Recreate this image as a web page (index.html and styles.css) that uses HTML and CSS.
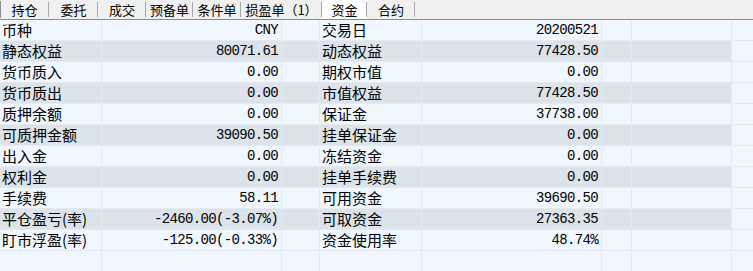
FILE: index.html
```html
<!DOCTYPE html>
<html lang="zh-CN">
<head>
<meta charset="utf-8">
<title>资金</title>
<link rel="stylesheet" href="styles.css">
</head>
<body>
<div class="panel">
  <div class="tabs">
    <div class="tab w49">持仓</div>
    <div class="tab w49">委托</div>
    <div class="tab w48">成交</div>
    <div class="tab w47">预备单</div>
    <div class="tab w48">条件单</div>
    <div class="tab w81">损盈单（1）</div>
    <div class="tab w45 active">资金</div>
    <div class="tab w48">合约</div>
  </div>
  <div class="grid">
    <div class="row"><div class="c lbl">币种</div><div class="c val">CNY</div><div class="c"></div><div class="c lbl">交易日</div><div class="c val">20200521</div><div class="c"></div><div class="c"></div><div class="c last"></div></div>
    <div class="row alt"><div class="c lbl">静态权益</div><div class="c val">80071.61</div><div class="c"></div><div class="c lbl">动态权益</div><div class="c val">77428.50</div><div class="c"></div><div class="c"></div><div class="c last"></div></div>
    <div class="row"><div class="c lbl">货币质入</div><div class="c val">0.00</div><div class="c"></div><div class="c lbl">期权市值</div><div class="c val">0.00</div><div class="c"></div><div class="c"></div><div class="c last"></div></div>
    <div class="row alt"><div class="c lbl">货币质出</div><div class="c val">0.00</div><div class="c"></div><div class="c lbl">市值权益</div><div class="c val">77428.50</div><div class="c"></div><div class="c"></div><div class="c last"></div></div>
    <div class="row"><div class="c lbl">质押余额</div><div class="c val">0.00</div><div class="c"></div><div class="c lbl">保证金</div><div class="c val">37738.00</div><div class="c"></div><div class="c"></div><div class="c last"></div></div>
    <div class="row alt"><div class="c lbl">可质押金额</div><div class="c val">39090.50</div><div class="c"></div><div class="c lbl">挂单保证金</div><div class="c val">0.00</div><div class="c"></div><div class="c"></div><div class="c last"></div></div>
    <div class="row"><div class="c lbl">出入金</div><div class="c val">0.00</div><div class="c"></div><div class="c lbl">冻结资金</div><div class="c val">0.00</div><div class="c"></div><div class="c"></div><div class="c last"></div></div>
    <div class="row alt"><div class="c lbl">权利金</div><div class="c val">0.00</div><div class="c"></div><div class="c lbl">挂单手续费</div><div class="c val">0.00</div><div class="c"></div><div class="c"></div><div class="c last"></div></div>
    <div class="row"><div class="c lbl">手续费</div><div class="c val">58.11</div><div class="c"></div><div class="c lbl">可用资金</div><div class="c val">39690.50</div><div class="c"></div><div class="c"></div><div class="c last"></div></div>
    <div class="row alt"><div class="c lbl">平仓盈亏(率)</div><div class="c val">-2460.00(-3.07%)</div><div class="c"></div><div class="c lbl">可取资金</div><div class="c val">27363.35</div><div class="c"></div><div class="c"></div><div class="c last"></div></div>
    <div class="row"><div class="c lbl">盯市浮盈(率)</div><div class="c val">-125.00(-0.33%)</div><div class="c"></div><div class="c lbl">资金使用率</div><div class="c val">48.74%</div><div class="c"></div><div class="c"></div><div class="c last"></div></div>
    <div class="row"><div class="c"></div><div class="c"></div><div class="c"></div><div class="c"></div><div class="c"></div><div class="c"></div><div class="c"></div><div class="c last"></div></div>
  </div>
</div>
</body>
</html>
```
FILE: styles.css
```css
html, body {
  margin: 0;
  padding: 0;
  background: #f0f7ff;
}
body {
  width: 753px;
  height: 271px;
  overflow: hidden;
  font-family: "Noto Sans CJK SC", sans-serif;
  color: #000;
}
.panel {
  display: flex;
  flex-direction: column;
}
.tabs {
  display: flex;
  height: 19px;
  background-color: #f0f0f0;
  border-bottom: 1px solid #8c8c8c;
  background-image: linear-gradient(#8c8c8c, #8c8c8c);
  background-repeat: no-repeat;
  background-size: 1px 17px;
  background-position: 0 1px;
}
.tab {
  box-sizing: border-box;
  height: 19px;
  display: flex;
  align-items: center;
  justify-content: center;
  font-size: 13px;
  line-height: 19px;
  padding-bottom: 1px;
  background-image: linear-gradient(#a8a8a8, #a8a8a8);
  background-repeat: no-repeat;
  background-size: 1px 15px;
  background-position: right 0 top 2px;
}
.tab.active {
  background-color: #ffffff;
}
.w49 { width: 49px; }
.w48 { width: 48px; }
.w47 { width: 47px; }
.w45 { width: 45px; }
.w81 { width: 81px; }
.grid {
  display: flex;
  flex-direction: column;
}
.row {
  display: grid;
  grid-template-columns: 102px 180px 38px 102px 180px 30px 100px 21px;
  height: 21px;
}
.c {
  box-sizing: border-box;
  height: 21px;
  border-right: 1px solid #e6eaee;
  border-bottom: 1px solid #e6eaee;
  background: #f0f7ff;
  white-space: nowrap;
  overflow: hidden;
  line-height: 20px;
}
.row.alt .c {
  background: #dce3ea;
}
.row.alt .c.last {
  background: #f0f7ff;
}
.c.last {
  border-right: none;
}
.lbl {
  font-size: 15px;
  padding-left: 2px;
}
.val {
  text-align: right;
  padding-right: 3px;
  font-family: "Liberation Mono", "Noto Sans CJK SC", monospace;
  font-size: 14px;
  letter-spacing: -0.65px;
}
```
